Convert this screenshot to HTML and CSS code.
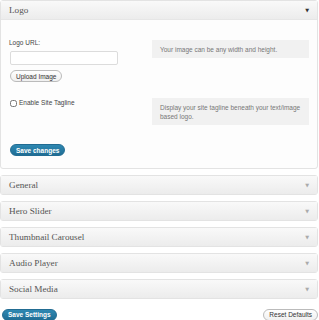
FILE: index.html
```html
<!DOCTYPE html>
<html lang="en">
<head>
  <meta charset="UTF-8">
  <title>Theme Options</title>
  <link rel="stylesheet" href="styles.css">
</head>
<body>
  <div class="wrap">
    <div class="panel open">
      <div class="panel-head"><span>Logo</span><span class="arrow dark">&#9660;</span></div>
      <div class="panel-body">
        <div class="option">
          <div class="controls">
            <label>Logo URL:</label>
            <input type="text" class="text-field">
            <button class="btn">Upload Image</button>
          </div>
          <div class="desc">Your image can be any width and height.</div>
        </div>
        <div class="option tagline">
          <div class="controls">
            <label class="check"><input type="checkbox"> Enable Site Tagline</label>
          </div>
          <div class="desc">Display your site tagline beneath your text/image based logo.</div>
        </div>
        <button class="btn primary">Save changes</button>
      </div>
    </div>

    <div class="panel"><div class="panel-head"><span>General</span><span class="arrow">&#9660;</span></div></div>
    <div class="panel"><div class="panel-head"><span>Hero Slider</span><span class="arrow">&#9660;</span></div></div>
    <div class="panel"><div class="panel-head"><span>Thumbnail Carousel</span><span class="arrow">&#9660;</span></div></div>
    <div class="panel"><div class="panel-head"><span>Audio Player</span><span class="arrow">&#9660;</span></div></div>
    <div class="panel"><div class="panel-head"><span>Social Media</span><span class="arrow">&#9660;</span></div></div>

    <div class="footer">
      <button class="btn primary">Save Settings</button>
      <button class="btn">Reset Defaults</button>
    </div>
  </div>
</body>
</html>
```

FILE: styles.css
```css
* {
  box-sizing: border-box;
}
body {
  margin: 0;
  background: #fff;
  font-family: "Liberation Sans", Arial, sans-serif;
  color: #333;
}
.wrap {
  width: 318px;
  display: flex;
  flex-direction: column;
  gap: 6px;
}
.panel {
  border: 1px solid #e3e3e3;
  border-radius: 3px;
  background: #fdfdfd;
}
.panel-head {
  height: 18px;
  display: flex;
  align-items: center;
  justify-content: space-between;
  padding: 0 8px;
  background: linear-gradient(#f9f9f9, #ececec);
  font-family: "Liberation Serif", Georgia, serif;
  font-size: 9.2px;
  color: #555;
}
.panel.open .panel-head {
  height: 19px;
  border-bottom: 1px solid #e6e6e6;
}
.arrow {
  font-size: 5px;
  color: #aaa;
  font-family: "DejaVu Sans", sans-serif;
}
.arrow.dark {
  color: #333;
}
.panel-body {
  padding: 19px 8px 11px 8px;
}
.option {
  display: flex;
  align-items: flex-start;
  justify-content: space-between;
  font-size: 6.5px;
}
.controls {
  display: flex;
  flex-direction: column;
  align-items: flex-start;
}
.controls label {
  color: #444;
  height: 8px;
  line-height: 8px;
  margin-bottom: 4px;
}
.text-field {
  width: 108px;
  height: 14px;
  margin: 0 0 5px 1px;
  padding: 0;
  border: 1px solid #dcdcdc;
  border-radius: 2px;
  background: #fff;
}
.desc {
  width: 157px;
  background: #f1f1f1;
  color: #777;
  padding: 5px 7px 4px 8px;
  line-height: 9px;
  margin-top: 1px;
}
.option.tagline {
  margin-top: 16px;
}
.option.tagline .controls {
  padding-top: 1px;
}
.option.tagline .desc {
  margin-top: 0;
  padding: 5px 7px 4px 8px;
}
.check {
  display: flex;
  align-items: center;
  gap: 2px;
}
.check input {
  width: 7px;
  height: 7px;
  margin: 0 0 0 1px;
}
.btn {
  font-family: "Liberation Sans", Arial, sans-serif;
  font-size: 6.5px;
  height: 12px;
  padding: 0 5px;
  border: 1px solid #bbb;
  border-radius: 7px;
  background: linear-gradient(#fefefe, #f0f0f0);
  color: #333;
  margin-left: 1px;
}
.btn.primary {
  background: linear-gradient(#2e88b2, #1f6d94);
  border-color: #226c92;
  color: #fff;
  font-weight: bold;
}
.panel-body .btn.primary {
  margin-top: 19px;
}
.footer {
  display: flex;
  justify-content: space-between;
  padding: 4px 0 0 1px;
}
```
